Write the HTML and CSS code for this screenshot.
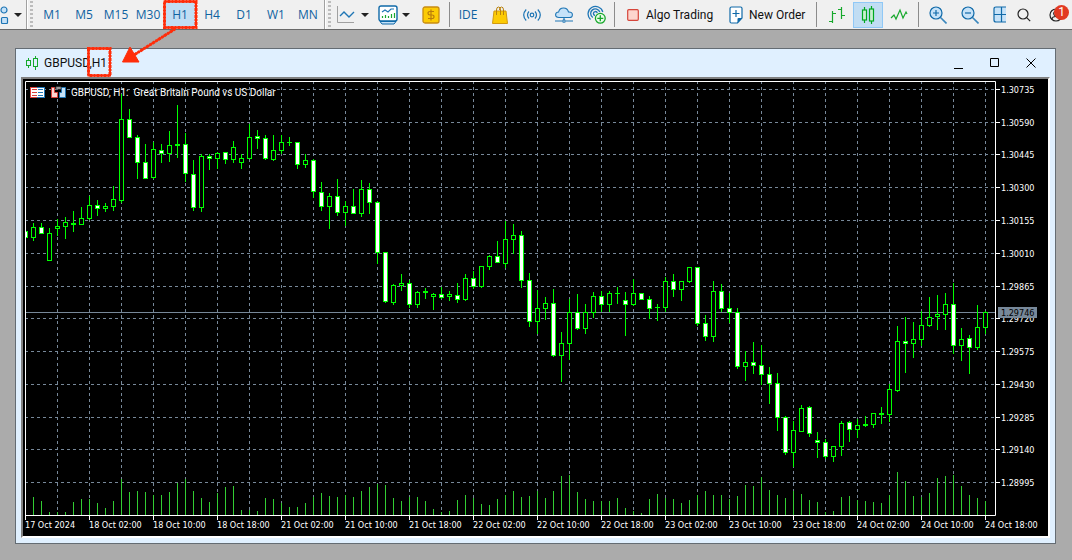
FILE: index.html
```html
<!DOCTYPE html>
<html lang="en">
<head>
<meta charset="utf-8">
<title>GBPUSD,H1</title>
<link rel="stylesheet" href="styles.css">
</head>
<body>
<header class="toolbar">
  <button class="tool objects" aria-label="Objects">
    <svg width="9" height="18" viewBox="0 0 9 18" class="blue"><circle cx="4" cy="4" r="3" fill="#c6e2f8"/><rect x="1.500" y="11.500" width="6" height="6" rx="1" fill="#c6e2f8"/></svg>
    <span class="caret"></span>
  </button>
  <span class="edge"></span><span class="grip"></span>
  <nav class="frames" aria-label="Timeframes">
    <button>M1</button><button>M5</button><button>M15</button><button>M30</button><button class="on">H1</button><button>H4</button><button>D1</button><button>W1</button><button>MN</button>
  </nav>
  <span class="edge"></span><span class="grip"></span>
  <div class="group">
    <button class="tool drop" aria-label="Chart type"><svg width="18" height="18" viewBox="0 0 18 18"><path d="M.5 0v16.500H17" fill="none" stroke="#a0a0a0"/><path d="M3 10l4-4 5 5 5-5" fill="none" stroke="#1f76b5" stroke-width="1.400"/></svg><span class="caret"></span></button>
    <button class="tool drop" aria-label="Indicators"><svg width="20" height="20" viewBox="0 0 20 20"><rect x="1" y="1" width="18" height="15" rx="2" fill="#fff" stroke="#0f69a8" stroke-width="1.400"/><path d="M4 7l3-2 3 2 3-3h3" fill="none" stroke="#1f76b5" stroke-width="1.200"/><path d="M4.500 13v-2M7.500 13v-3M10.500 13v-2M13.500 13V9M16.500 13V8" stroke="#16a82b" stroke-width="1.200"/><path d="M2 16.500h16l-2 2.500H4z" fill="#c6e2f8" stroke="#0f69a8"/></svg><span class="caret"></span></button>
    <button class="tool" aria-label="Quotes"><svg width="18" height="18" viewBox="0 0 18 18"><rect x="1" y="1" width="16" height="16" rx="2" fill="#fccb05" stroke="#c78c12" stroke-width="1.300"/><path d="M12 5.500H8Q6 5.500 6 7.200T8 9h2q2 0 2 1.800t-2 1.700H6M9 3.500v11" fill="none" stroke="#b97c0c" stroke-width="1.200"/></svg></button>
  </div>
  <span class="rule"></span>
  <div class="group">
    <button class="tool ide">IDE</button>
    <button class="tool" aria-label="Market"><svg width="16" height="18" viewBox="0 0 16 18"><path d="M2 5h12l1.500 12.500H.5z" fill="#fccb05" stroke="#d29a10"/><path d="M4.500 9V4q0-3 2-3t2 3v5M7.500 4q0-3 2-3t2 3v5" fill="none" stroke="#b98210"/></svg></button>
    <button class="tool" aria-label="Signals"><svg width="18" height="14" viewBox="0 0 18 14" fill="none" stroke="#1f76b5" stroke-width="1.200"><circle cx="9" cy="7" r="1.800"/><path d="M6 3.500q-3 3.500 0 7M12 3.500q3 3.500 0 7M3.200 1.500q-5 5.500 0 11M14.800 1.500q5 5.500 0 11"/></svg></button>
    <button class="tool" aria-label="Hosting"><svg width="18" height="16" viewBox="0 0 18 16" fill="none" stroke="#1f76b5" stroke-width="1.100"><path d="M4 10.500Q.6 10.500.6 7.800T3.600 5Q4.500 1 8.500 1t5 4q3.900-.2 3.900 2.800T14 10.500z" fill="#c6e2f8"/><path d="M9 10.500v3M0 14h7M11 14h7"/><circle cx="9" cy="14" r="1.300"/></svg></button>
    <button class="tool" aria-label="Copy signals"><svg width="19" height="19" viewBox="0 0 19 19" fill="none" stroke="#1f76b5" stroke-width="1.300"><path d="M3.500 14.500A7.500 7.500 0 1 1 15.800 7M5.800 12.500A4.700 4.700 0 1 1 12.800 7M8 10.500A2 2 0 1 1 10.300 8"/><circle cx="13.300" cy="13.300" r="4.900" fill="#e9fbe9" stroke="#16a82b"/><path d="M13.300 10.300v6M10.300 13.300h6" stroke="#16a82b"/></svg></button>
  </div>
  <span class="rule"></span>
  <div class="group">
    <button class="text algo"><svg width="12" height="12" viewBox="0 0 12 12"><rect x=".7" y=".7" width="10.600" height="10.600" rx="1" fill="#fdd5cd" stroke="#d6463b" stroke-width="1.200"/></svg>Algo Trading</button>
    <button class="text order"><svg width="14" height="18" viewBox="0 0 14 18"><path d="M2.500 1h9q1.500 0 1.500 1.500V12l-4.500 5h-6Q1 17 1 15.500v-13Q1 1 2.500 1z" fill="#fff" stroke="#0f69a8" stroke-width="1.200"/><path d="M13 12H9.500q-1 0-1 1v4z" fill="#0f69a8"/><path d="M7 4v7M3.500 7.500h7" stroke="#0f69a8" stroke-width="1.200"/></svg>New Order</button>
  </div>
  <span class="rule"></span>
  <div class="group types">
    <button class="tool" aria-label="Bars"><svg width="18" height="18" viewBox="0 0 18 18" fill="none" stroke="#16a82b" stroke-width="1.200"><path d="M4.500 5v12M4.500 7.500H8M1 15.500h3.500M13.500 1v12M10 3.500h3.500M13.500 9.500H17"/></svg></button>
    <button class="tool on" aria-label="Candles"><svg width="14" height="18" viewBox="0 0 14 18" fill="#c8f0d0" stroke="#00a820" stroke-width="1.200"><path d="M3.500 1v16M10.500 0v18"/><rect x="1.500" y="4" width="4" height="10"/><rect x="8.500" y="3" width="4" height="12"/></svg></button>
    <button class="tool" aria-label="Line"><svg width="18" height="14" viewBox="0 0 18 14" fill="none" stroke="#16a82b" stroke-width="1.200"><path d="M1 10l3-3 2 4 4-9 3 8 3-6 1 2"/></svg></button>
  </div>
  <span class="rule"></span>
  <div class="group zooms">
    <button class="tool" aria-label="Zoom in"><svg width="18" height="18" viewBox="0 0 18 18" fill="#c6e2f8" stroke="#0f69a8" stroke-width="1.200"><path d="M11.500 11.500l6 6" stroke="#3a87bd" stroke-width="1.600"/><circle cx="7" cy="7" r="6"/><path d="M7 4v6M4 7h6"/></svg></button>
    <button class="tool" aria-label="Zoom out"><svg width="18" height="18" viewBox="0 0 18 18" fill="#c6e2f8" stroke="#0f69a8" stroke-width="1.200"><path d="M11.500 11.500l6 6" stroke="#3a87bd" stroke-width="1.600"/><circle cx="7" cy="7" r="6"/><path d="M4 7h6"/></svg></button>
    <button class="tool tile" aria-label="Tile windows"><svg width="13" height="18" viewBox="0 0 13 18" fill="#c6e2f8" stroke="#0f69a8" stroke-width="1.200"><path d="M13 1H3Q1 1 1 3v11q0 2 2 2h10M1 8.500h12M8.500 1v15"/></svg></button>
  </div>
  <div class="group account">
    <button class="tool" aria-label="Search"><svg width="14" height="14" viewBox="0 0 14 14" fill="none" stroke="#222" stroke-width="1.200"><circle cx="6" cy="6" r="5"/><path d="M9.700 9.700l3.500 3.500"/></svg></button>
    <button class="tool user" aria-label="Account"><svg width="14" height="14" viewBox="0 0 14 14" fill="none" stroke="#222" stroke-width="1.200"><circle cx="7" cy="7" r="6"/><circle cx="7" cy="5.500" r="2.300"/><path d="M3 11.500q0-3 4-3t4 3"/></svg><span class="badge">1</span></button>
  </div>
</header>
<main class="desk">
  <section class="window">
    <div class="title">
      <svg width="12" height="14" viewBox="0 0 12 14" fill="none" stroke="#16a82b"><path d="M2.500 2v10M9.500 0v14" /><rect x=".5" y="4.500" width="4" height="5" fill="#e0f0ff"/><rect x="7.500" y="2.500" width="4" height="8" fill="#e0f0ff"/></svg>
      <h1>GBPUSD,H1</h1>
      <div class="controls">
        <button aria-label="Minimize"><svg width="10" height="12" viewBox="0 0 10 12"><path d="M0 11.500h9"/></svg></button>
        <button aria-label="Maximize"><svg width="10" height="10" viewBox="0 0 10 10"><path d="M.5 .5h8v8h-8z"/></svg></button>
        <button aria-label="Close"><svg width="10" height="10" viewBox="0 0 10 10"><path d="M.5 .5l9 9M9.500 .5l-9 9"/></svg></button>
      </div>
    </div>
    <div class="view">
      <svg class="chart" id="chart" viewBox="23 79 1025 457" role="img" aria-label="GBPUSD hourly candles">
        <g id="grid"></g>
        <path class="last" d="M26 312.500H995"/>
        <g id="volumes"></g>
        <g id="candles"></g>
        <path class="axis" d="M25.500 516V81.500H995.500V515.500H25"/>
        <g id="labels"></g>
        <rect class="tag" x="998" y="307" width="39" height="11"/>
        <text class="tag-text" x="1001" y="316">1.29746</text>
        <g>
          <rect x="30" y="87" width="8" height="11" fill="#d8403a"/><rect x="31" y="88" width="6" height="9" fill="#fff"/>
          <path d="M32 89.500h5M32 92.500h5M32 95.500h5" stroke="#d8403a"/>
          <rect x="37" y="87" width="8" height="11" fill="#1f76b5"/><rect x="37" y="88" width="7" height="9" fill="#fff"/>
          <path d="M38 89.500h5M38 92.500h5M38 95.500h5" stroke="#1f76b5"/>
          <path d="M51.500 87.500h3v5h3v5h-6z" fill="#fbd5d0" stroke="#d8403a"/>
          <path d="M65.500 87.500h-4v5h-2v5h6z" fill="#c6e2f8" stroke="#1f76b5"/>
          <path d="M56 87h5v2h-5z" fill="#ddd" stroke="#555"/>
        </g>
        <text class="name" x="71" y="96">GBPUSD, H1:&#160; Great Britain Pound vs US Dollar</text>
      </svg>
    </div>
  </section>
</main>
<svg class="marks" width="210" height="80" viewBox="0 0 210 80" aria-hidden="true">
  <path d="M164.500 1.500H196V27.500H164.500zM88.500 48.500H110V75.500H88.500zM175 29L134 55"/>
  <path class="rough" d="M164.500 1.500H196V27.500H164.500zM88.500 48.500H110V75.500H88.500zM175 29L134 55"/>
  <path class="head" d="M130 47L139 62H122.500z"/>
</svg>
<script src="chart.js"></script>
</body>
</html>
```
FILE: styles.css
```css
* { box-sizing: border-box; }
body {
  margin: 0;
  min-height: 100vh;
  background: #ababab;
  font-family: Roboto, "Open Sans", sans-serif;
  font-size: 12px;
  color: #111;
}
button {
  border: 0;
  padding: 0;
  background: none;
  font: inherit;
  color: inherit;
}
svg { display: block; flex: none; }
.toolbar {
  display: flex;
  align-items: center;
  height: 30px;
  background: #f0f0f0;
  border-bottom: 1px solid #696969;
  overflow: hidden;
}
.group, .frames { display: flex; align-items: center; flex: none; }
.tool {
  display: flex;
  align-items: center;
  justify-content: center;
  flex: none;
  width: 32px;
  height: 26px;
}
.blue { fill: none; stroke: #1f76b5; stroke-width: 1.2px; }
.objects { width: 26px; justify-content: space-between; padding: 0 4px 0 0; }
.drop { width: 41px; justify-content: space-between; padding: 0 5px 0 4px; }
.caret {
  border: 4px solid transparent;
  border-top-color: #222;
  border-bottom: 0;
}
.edge { flex: none; width: 2px; height: 29px; background: #a0a0a0; border-right: 1px solid #fff; }
.grip {
  flex: none;
  width: 3px;
  height: 28px;
  margin: 0 3px 0 2px;
  background: repeating-linear-gradient(#bcbcbc 0 2px, #f0f0f0 2px 4px);
}
.frames button { width: 32px; height: 27px; color: #0f62a0; font-family: "Open Sans", sans-serif; }
.frames + .edge + .grip { margin-right: 2px; }
.frames .on, .types .on { background: #c1ddf3; border: 1px solid #90c8f6; }
.rule { flex: none; width: 1px; height: 25px; margin: 0 2px; background: #8c8c8c; }
.ide { color: #0f62a0; font-family: "Open Sans", sans-serif; }
.text { display: flex; align-items: center; gap: 7px; height: 26px; white-space: nowrap; }
.algo { width: 102px; padding-left: 10px; }
.order { width: 95px; padding-left: 10px; gap: 6px; }
.types { padding: 0 1px 0 2px; }
.types .on { width: 30px; }
.zooms { padding-left: 1px; }
.tile { width: 20px; justify-content: flex-end; }
.account { margin-left: auto; }
.user { position: relative; }
.badge {
  position: absolute;
  top: 3px;
  right: 3px;
  width: 15px;
  height: 15px;
  border-radius: 8px;
  background: #e23a22;
  color: #fff;
  line-height: 15px;
  text-align: center;
}
.desk { padding: 18px 16px 16px 15px; }
.window { background: #e0f0ff; border: 1px solid #646c73; padding: 0 5px 5px; }
.title { display: flex; align-items: center; height: 28px; padding: 0 1px 0 5px; gap: 6px; }
.title h1 { margin: 0; font-size: 12px; font-weight: 400; }
.controls { display: flex; margin-left: auto; }
.controls button { display: flex; align-items: center; justify-content: center; width: 36px; height: 28px; }
.controls path { fill: none; stroke: #000; }
.view {
  border: 2px solid;
  border-color: #808080 #fff #fff #808080;
  background: #000;
}
.chart { width: 100%; height: auto; }
.chart text { font-family: "DejaVu Sans Condensed", "DejaVu Sans", sans-serif; font-size: 9px; fill: #fff; }
.chart .name { font-family: Roboto, sans-serif; font-size: 10px; }
.chart .tag-text { fill: #000; }
.tag { fill: #778899; }
.last { stroke: #778899; }
.axis { fill: none; stroke: #fff; }
.grid-line { stroke: #778899; stroke-dasharray: 3 3; }
.tick { stroke: #fff; }
.volume { stroke: #32cd32; }
.candle { stroke: #00ff00; fill: #000; }
.candle.down { fill: #fff; }
.marks { position: absolute; top: 0; left: 0; pointer-events: none; }
.marks path { fill: none; stroke: #ff2d0a; stroke-width: 2px; }
.marks .rough { stroke-width: 3px; stroke-dasharray: 2 1 3 1; }
.marks .head { fill: #ff2d0a; stroke-width: 1px; }
```
FILE: chart.js
```js
const NS = "http://www.w3.org/2000/svg";
const LEFT = 25, STEP = 8, BOTTOM = 515;

function add(parent, tag, attrs, text) {
  const el = document.createElementNS(NS, tag);
  for (const key in attrs) el.setAttribute(key, attrs[key]);
  if (text) el.textContent = text;
  document.getElementById(parent).appendChild(el);
}

// Each bar: high, body top, body bottom, low; "w" marks a falling bar.
const bars = `231 231 238 238 w,223 227 238 241,223 227 234 234 w,228 233 261 261,219 226 229 236,217 222 227 239,211 223 225 232,207 218 225 225,
196 205 219 220,200 205 209 216 w,203 206 209 212,186 199 207 211,94 119 201 203,109 119 138 138 w,135 137 163 179 w,144 162 179 179 w,
142 149 178 179,144 150 154 163 w,131 145 154 162,105 144 146 158,133 144 174 182 w,160 174 208 211 w,154 156 208 212,154 156 159 170 w,
152 153 159 169,152 152 160 164 w,141 147 160 163,154 158 163 169,124 137 159 159,130 136 139 149 w,135 138 159 160 w,135 150 160 161,
135 142 151 154,137 142 143 146,142 142 165 169 w,154 160 165 168,159 160 192 198 w,182 192 207 211 w,193 196 207 229,179 196 213 216 w,
201 206 213 226,189 206 214 214 w,180 189 214 217,183 189 203 214 w,201 202 253 264 w,252 252 302 303 w,284 285 303 305,274 283 286 291,
280 283 305 308 w,291 292 305 308,288 291 293 299,293 294 297 310,287 294 298 299 w,291 294 297 301,283 295 300 303 w,274 278 300 301,
271 278 287 289 w,266 266 287 288,255 256 267 270,241 256 263 263 w,221 239 264 268,224 235 240 254,231 235 281 288 w,273 280 322 327 w,
290 308 322 334,297 303 309 320,289 303 356 357 w,332 343 356 382,299 312 344 360,294 312 329 330 w,304 312 329 334,292 296 313 318,
291 296 305 312 w,291 293 305 312,287 293 294 304,292 300 305 336 w,279 293 305 306,293 293 300 300 w,296 299 309 319 w,304 307 308 321,
277 281 308 312,274 281 290 297 w,281 281 290 301,267 267 282 283,267 267 324 326 w,315 323 337 341 w,281 291 337 342,284 291 309 312 w,
293 308 313 323 w,308 312 367 369 w,351 362 367 381,342 362 366 374 w,345 365 375 385 w,367 374 384 404 w,373 383 418 431 w,416 417 453 455 w,
421 430 453 467,405 408 432 432,406 407 434 437 w,432 440 443 458 w,439 442 457 459 w,446 446 457 462,421 423 447 456,421 422 430 442 w,
419 425 430 438,416 424 426 427,413 413 425 428,407 413 415 424,384 389 415 422,326 341 391 392,317 341 344 373 w,322 339 344 358,
311 325 340 346,297 317 326 327,295 314 317 330,293 304 315 330,283 304 346 354 w,328 339 346 361,335 338 348 374 w,305 327 348 350,
311 312 328 334`.split(",").map(row => row.trim().split(" "));

const volumes = [0, 18, 14, 3, 3, 3, 13, 16, 16, 12, 7, 14, 36, 23, 24, 23, 20, 20, 23, 32, 36, 24, 17, 13, 22, 28, 29, 5, 5, 4, 17, 16,
  12, 8, 8, 12, 18, 22, 19, 18, 20, 18, 24, 28, 31, 30, 17, 14, 18, 18, 14, 6, 3, 4, 15, 20, 17, 11, 10, 16, 20, 24, 18, 19,
  24, 17, 24, 39, 40, 23, 16, 14, 14, 14, 17, 7, 4, 2, 16, 21, 17, 16, 12, 15, 20, 24, 20, 20, 16, 19, 30, 29, 38, 25, 20, 17,
  24, 21, 15, 13, 3, 4, 18, 19, 15, 14, 13, 12, 20, 43, 34, 19, 18, 22, 37, 39, 40, 29, 20, 17, 14];

const priceRows = [89, 122, 154, 187, 220, 253, 286, 318, 351, 384, 417, 449, 482];
const days = ["18 Oct", "21 Oct", "22 Oct", "23 Oct", "24 Oct"];
const hours = ["02:00", "10:00", "18:00"];

for (let x = 57; x < 995; x += 32) {
  add("grid", "path", { class: "grid-line", d: `M${x + 0.5} 81V${BOTTOM}` });
}
priceRows.forEach((y, i) => {
  add("grid", "path", { class: "grid-line", d: `M${LEFT} ${y + 0.5}H995` });
  add("labels", "path", { class: "tick", d: `M996 ${y + 0.5}h4` });
  add("labels", "text", { x: 1001, y: y + 4 }, (1.30735 - i * 0.00145).toFixed(5));
});
for (let i = 0; i < 16; i++) {
  const x = LEFT + i * 64;
  const label = i === 0 ? "17 Oct 2024" : `${days[Math.floor((i - 1) / 3)]} ${hours[(i - 1) % 3]}`;
  add("labels", "path", { class: "tick", d: `M${x + 0.5} 516v4` });
  add("labels", "text", { x, y: 528 }, label);
}
bars.forEach(([high, top, bottom, low, down], i) => {
  const x = LEFT + i * STEP;
  const clip = i === 0 ? 0 : 2;
  if (volumes[i]) add("volumes", "path", { class: "volume", d: `M${x + 0.5} ${BOTTOM - volumes[i]}V${BOTTOM}` });
  add("candles", "path", { class: "candle", d: `M${x + 0.5} ${high}V${low}` });
  add("candles", "rect", {
    class: down ? "candle down" : "candle",
    x: x - clip + 0.5, y: +top + 0.5, width: 2 + clip, height: bottom - top - 1
  });
  if (bottom - top === 1) add("candles", "path", { class: "candle", d: `M${x - 2} ${+top + 0.5}h5` });
});
```
